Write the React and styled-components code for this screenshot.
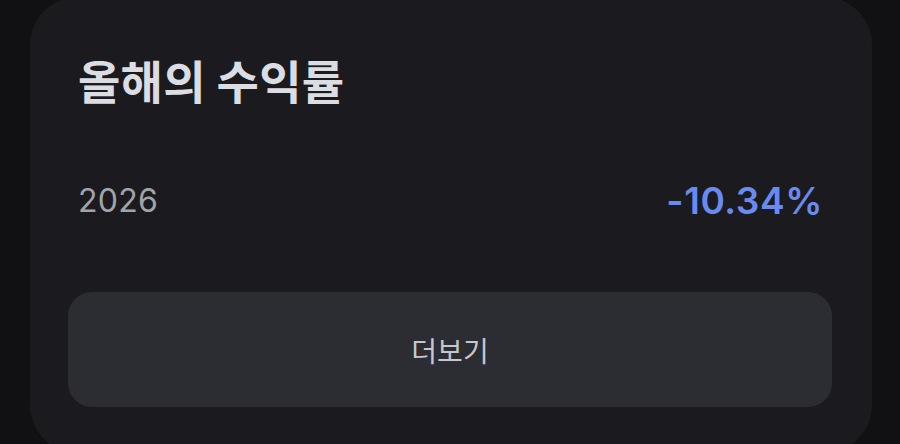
import React from "react";
import styled, { createGlobalStyle } from "styled-components";

const Global = createGlobalStyle`
  html, body {
    margin: 0;
    padding: 0;
    background: #111113;
    overflow: hidden;
  }
  body {
    font-family: Inter, "Noto Sans CJK KR", sans-serif;
    -webkit-font-smoothing: antialiased;
  }
`;

const Page = styled.div`
  width: 900px;
  height: 444px;
  padding: 0 28px 0 30px;
  box-sizing: border-box;
  background: #111113;
  overflow: hidden;
`;

const Card = styled.section`
  margin-top: -3px;
  background: #1b1b1f;
  border-radius: 48px;
  padding: 52px 40px 46px 38px;
  display: flex;
  flex-direction: column;
`;

const Title = styled.h2`
  margin: 0 0 0 10px;
  font-family: "Noto Sans CJK KR", Inter, sans-serif;
  font-size: 46px;
  font-weight: 700;
  line-height: 60px;
  letter-spacing: 0.3px;
  color: #dcdde2;
`;

const Row = styled.div`
  display: flex;
  align-items: center;
  justify-content: space-between;
  margin-top: 67px;
  padding: 0 9px 0 10px;
  height: 48px;
`;

const Year = styled.span`
  font-size: 32px;
  font-weight: 400;
  letter-spacing: 0.3px;
  color: #a2a3a9;
`;

const Value = styled.span`
  font-size: 37px;
  font-weight: 600;
  color: #6a8af0;
  letter-spacing: 0.6px;
`;

const MoreButton = styled.button`
  margin-top: 68px;
  height: 115px;
  border: none;
  border-radius: 24px;
  background: #2c2d32;
  color: #c6c7cc;
  font-family: "Noto Sans CJK KR", Inter, sans-serif;
  font-size: 28px;
  font-weight: 400;
  display: flex;
  align-items: center;
  justify-content: center;
  cursor: pointer;
`;

export default function App() {
  return (
    <>
      <Global />
      <Page>
        <Card>
          <Title>올해의 수익률</Title>
          <Row>
            <Year>2026</Year>
            <Value>-10.34%</Value>
          </Row>
          <MoreButton>더보기</MoreButton>
        </Card>
      </Page>
    </>
  );
}
